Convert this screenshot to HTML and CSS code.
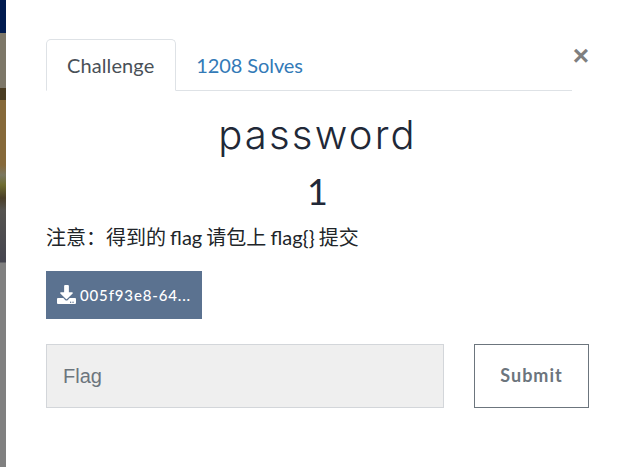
FILE: index.html
```html
<!DOCTYPE html>
<html lang="en">
<head>
<meta charset="utf-8">
<title>password</title>
<link rel="stylesheet" href="styles.css">
</head>
<body>
<div class="backdrop"></div>
<main class="modal">
  <div class="top">
    <ul class="tabs">
      <li class="tab active">Challenge</li>
      <li class="tab">1208 Solves</li>
    </ul>
    <span class="close">×</span>
  </div>
  <h2 class="title">password</h2>
  <h3 class="value">1</h3>
  <p class="desc">注意：得到的 flag 请包上 flag{} 提交</p>
  <a class="file">
    <svg class="icon" viewBox="0 0 512 512"><path fill="#fff" d="M216 0h80c13.3 0 24 10.7 24 24v168h87.7c17.8 0 26.7 21.5 14.1 34.1L269.7 378.3c-7.5 7.5-19.8 7.5-27.3 0L90.1 226.1c-12.6-12.6-3.7-34.1 14.1-34.1H192V24c0-13.3 10.7-24 24-24zm296 376v112c0 13.3-10.7 24-24 24H24c-13.3 0-24-10.7-24-24V376c0-13.3 10.7-24 24-24h146.7l49 49c20.1 20.1 52.5 20.1 72.6 0l49-49H488c13.3 0 24 10.7 24 24zm-124 88c0-11-9-20-20-20s-20 9-20 20 9 20 20 20 20-9 20-20zm64 0c0-11-9-20-20-20s-20 9-20 20 9 20 20 20 20-9 20-20z"/></svg>
    <span>005f93e8-64...</span>
  </a>
  <form class="submit-row">
    <input class="flag" type="text" placeholder="Flag">
    <button class="submit" type="button">Submit</button>
  </form>
</main>
</body>
</html>
```
FILE: styles.css
```css
* { box-sizing: border-box; }
html, body { margin: 0; height: 100%; }
body {
  display: flex;
  width: 627px;
  height: 467px;
  overflow: hidden;
  background: #fff;
  font-family: "Lato", "Noto Sans CJK SC", sans-serif;
  color: #212529;
}
.backdrop {
  flex: 0 0 6px;
  background: linear-gradient(to bottom,
    #001a4f 0, #001a4f 33px,
    #7d7768 33px, #7d7768 88px,
    #4a3c22 88px, #4a3c22 100px,
    #86693a 100px, #86693a 165px,
    #7a7760 175px, #6e6c30 185px,
    #4a3e28 198px, #55534f 210px,
    #45454f 262px,
    #808080 263px, #808080 100%);
}
.modal { flex: 1; padding: 39px 38px 0 40px; }
.top { display: flex; align-items: flex-start; }
.tabs {
  flex: 0 0 526px;
  display: flex;
  margin: 0;
  padding: 0;
  list-style: none;
  border-bottom: 1px solid #dee2e6;
  height: 52px;
}
.tab {
  height: 52px;
  padding: 12px 20px 0 19px;
  font-size: 20px;
  line-height: 26px;
  letter-spacing: -0.1px;
  color: #337ab7;
  border: 1px solid transparent;
}
.tab.active {
  padding: 12px 21px 0 20px;
  letter-spacing: 0.1px;
  color: #495057;
  background: #fff;
  border-color: #dee2e6 #dee2e6 #fff;
  border-radius: 5px 5px 0 0;
}
.close {
  flex: 1;
  text-align: right;
  font-family: "Liberation Sans", sans-serif;
  font-weight: 700;
  font-size: 28px;
  line-height: 34px;
  color: #7f7f7f;
}
.title {
  margin: 14px 0 0;
  text-align: center;
  font-family: "Inter", sans-serif;
  font-weight: 300;
  font-size: 40px;
  line-height: 60px;
  letter-spacing: 2.2px;
  color: #212837;
}
.value {
  margin: 0;
  padding-top: 3px;
  text-align: center;
  font-weight: 400;
  font-size: 36px;
  line-height: 46px;
  color: #212837;
}
.desc {
  margin: 0;
  padding-top: 10px;
  font-size: 20px;
  line-height: 26px;
  word-spacing: -1px;
  color: #212529;
}
.file {
  display: flex;
  align-items: center;
  gap: 4px;
  width: 156px;
  height: 48px;
  margin-top: 21px;
  padding-left: 11px;
  background: #5b7290;
  color: #fff;
  font-size: 15px;
  font-weight: 500;
  letter-spacing: 0.85px;
}
.icon { width: 19px; height: 19px; margin-top: -2px; }
.submit-row {
  display: flex;
  justify-content: space-between;
  margin-top: 25px;
}
.flag {
  width: 398px;
  height: 64px;
  padding: 0 16px;
  background: #efefef;
  border: 1px solid #d3d6da;
  font-family: "Liberation Sans", sans-serif;
  font-size: 20px;
  color: #495057;
}
.flag::placeholder { color: #6c757d; opacity: 1; }
.submit {
  width: 115px;
  height: 64px;
  padding: 0 0 2px;
  background: #fff;
  border: 1px solid #6c757d;
  font-family: "Lato", sans-serif;
  font-weight: 700;
  font-size: 18px;
  letter-spacing: 1px;
  color: #6c757d;
}
```
